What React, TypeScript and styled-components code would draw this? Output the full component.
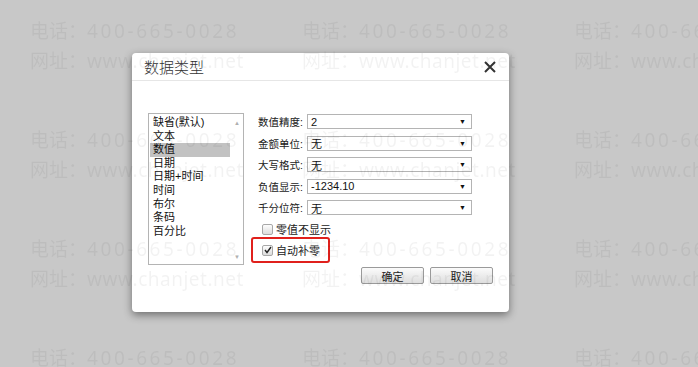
import React from "react";
import styled, { createGlobalStyle } from "styled-components";

const GlobalStyles = createGlobalStyle`
  html, body {
    margin: 0;
    padding: 0;
    background: #c8c8c8;
    font-family: "Liberation Sans", "Noto Sans CJK SC", sans-serif;
  }
`;

const Page = styled.div`
  width: 698px;
  height: 367px;
  box-sizing: border-box;
  padding: 53px 0 0 132px;
  background: #c8c8c8;
  overflow: hidden;
`;

const Dialog = styled.div`
  width: 377px;
  height: 259px;
  background: #fff;
  border-radius: 4px;
  box-shadow: 0 3px 9px rgba(0, 0, 0, 0.45);
  display: flex;
  flex-direction: column;
`;

const Header = styled.div`
  height: 27px;
  display: flex;
  align-items: center;
  justify-content: space-between;
  padding: 0 12px 0 12px;
  border-bottom: 1px solid #e6e6e6;
`;

const Title = styled.div`
  font-size: 15px;
  color: #333;
  font-family: "Noto Sans CJK SC", sans-serif;
  font-weight: 300;
`;

const Close = styled.button`
  border: none;
  background: none;
  padding: 0;
  width: 14px;
  height: 14px;
  display: flex;
  align-items: center;
  justify-content: center;
  cursor: pointer;
`;

const Body = styled.div`
  display: flex;
  padding: 32px 0 0 16px;
`;

const ListBox = styled.div`
  width: 96px;
  height: 152px;
  box-sizing: border-box;
  border: 1px solid #b4b4b4;
  display: flex;
`;

const Items = styled.div`
  flex: 1;
  padding: 2px 1px 0 1px;
`;

const Item = styled.div<{ selected?: boolean }>`
  height: 13.6px;
  line-height: 13.6px;
  font-size: 11px;
  color: #111;
  padding-left: 3px;
  background: ${(p) => (p.selected ? "#c2c2c2" : "transparent")};
`;

const ScrollBar = styled.div`
  width: 12px;
  display: flex;
  flex-direction: column;
  justify-content: space-between;
  align-items: center;
  padding: 6px 0 4px;
  color: #b0b0b0;
  font-size: 6px;
`;

const Form = styled.div`
  margin-left: 14px;
  padding-top: 1px;
  display: flex;
  flex-direction: column;
`;

const FieldRow = styled.div`
  display: flex;
  align-items: center;
  height: 15px;
  margin-bottom: 6.5px;
`;

const Label = styled.span`
  width: 49px;
  font-size: 10.5px;
  color: #222;
  white-space: nowrap;
`;

const Select = styled.div`
  width: 165px;
  height: 15px;
  box-sizing: border-box;
  border: 1px solid #b4b4b4;
  display: flex;
  align-items: center;
  justify-content: space-between;
  padding: 0 5px 0 3px;
  font-size: 11px;
  color: #111;
`;

const Arrow = styled.span`
  font-size: 7px;
  color: #111;
`;

const CheckRow = styled.label<{ highlight?: boolean }>`
  position: relative;
  display: flex;
  align-items: center;
  gap: 3px;
  height: 15px;
  margin: ${(p) => (p.highlight ? "6px" : "0")} 0 0 4px;
  font-size: 11px;
  color: #222;

  &::after {
    content: "";
    display: ${(p) => (p.highlight ? "block" : "none")};
    position: absolute;
    left: -11px;
    top: -6px;
    width: 75px;
    height: 22px;
    border: 2px solid #e0201c;
    border-radius: 3px;
  }
`;

const Box = styled.span`
  width: 9px;
  height: 9px;
  border: 1px solid #a8a8a8;
  border-radius: 2px;
  background: linear-gradient(#fdfdfd, #dcdcdc);
  display: flex;
  align-items: center;
  justify-content: center;
`;

const Footer = styled.div`
  display: flex;
  justify-content: flex-end;
  gap: 6px;
  padding: 2px 16px 0 0;
`;

const Button = styled.button`
  width: 63px;
  height: 17px;
  padding: 0;
  border: 1px solid #9a9a9a;
  border-radius: 2px;
  background: linear-gradient(#fbfbfb, #dedede);
  font-family: "Liberation Sans", "Noto Sans CJK SC", sans-serif;
  font-size: 11px;
  color: #222;
`;

const Watermark = styled.div`
  position: fixed;
  inset: 0;
  pointer-events: none;
  display: grid;
  grid-template-columns: repeat(3, 272px);
  grid-auto-rows: 109px;
  padding: 16px 0 0 30px;
  overflow: hidden;
`;

const Tile = styled.div`
  font-family: "Noto Sans", "Noto Sans CJK SC", sans-serif;
  font-size: 19px;
  line-height: 30px;
  color: rgba(0, 0, 0, 0.05);
  white-space: nowrap;
`;

const Spaced = styled.span<{ spacing: number }>`
  letter-spacing: ${(p) => p.spacing}px;
`;

const types = ["缺省(默认)", "文本", "数值", "日期", "日期+时间", "时间", "布尔", "条码", "百分比"];

const fields: [string, string][] = [
  ["数值精度:", "2"],
  ["金额单位:", "无"],
  ["大写格式:", "无"],
  ["负值显示:", "-1234.10"],
  ["千分位符:", "无"],
];

const App: React.FC = () => {
  return (
    <>
      <GlobalStyles />
      <Page>
        <Dialog>
          <Header>
            <Title>数据类型</Title>
            <Close aria-label="close">
              <svg width="12" height="12" viewBox="0 0 12 12">
                <path d="M1 1 L11 11 M11 1 L1 11" stroke="#333" strokeWidth="2" />
              </svg>
            </Close>
          </Header>
          <Body>
            <ListBox>
              <Items>
                {types.map((t) => (
                  <Item key={t} selected={t === "数值"}>
                    {t}
                  </Item>
                ))}
              </Items>
              <ScrollBar>
                <span>▲</span>
                <span>▼</span>
              </ScrollBar>
            </ListBox>
            <Form>
              {fields.map(([label, value]) => (
                <FieldRow key={label}>
                  <Label>{label}</Label>
                  <Select>
                    <span>{value}</span>
                    <Arrow>▼</Arrow>
                  </Select>
                </FieldRow>
              ))}
              <CheckRow>
                <Box />
                零值不显示
              </CheckRow>
              <CheckRow highlight>
                <Box>
                  <svg width="8" height="8" viewBox="0 0 8 8">
                    <path d="M1 4 L3 6.5 L7 1" stroke="#222" strokeWidth="1.4" fill="none" />
                  </svg>
                </Box>
                自动补零
              </CheckRow>
            </Form>
          </Body>
          <Footer>
            <Button>确定</Button>
            <Button>取消</Button>
          </Footer>
        </Dialog>
      </Page>
      <Watermark>
        {Array.from({ length: 12 }).map((_, i) => (
          <Tile key={i}>
            <div>
              电话：<Spaced spacing={2.6}>400-665-0028</Spaced>
            </div>
            <div>
              网址：<Spaced spacing={0.5}>www.chanjet.net</Spaced>
            </div>
          </Tile>
        ))}
      </Watermark>
    </>
  );
};

export default App;
